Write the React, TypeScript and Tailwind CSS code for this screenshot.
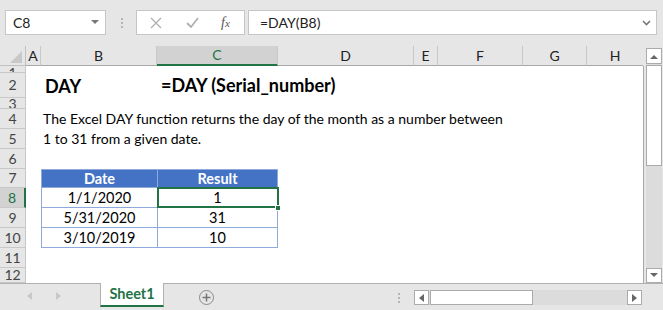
import React from "react";

const colWidths = [26, 15, 116, 121, 136, 24, 85, 64, 56];
const colNames = ["A", "B", "C", "D", "E", "F", "G", "H"];
const rowHeights = [7, 25, 11, 20, 20, 20, 19, 20, 20, 20, 20, 15];

const font = { fontFamily: "Lato, 'Open Sans', sans-serif" };

const RowLabel = ({ n, h }: { n: number; h: number }) => {
  const active = n === 8;
  let align = "items-center";
  if (n === 1) align = "items-start";
  if (n === 3) align = "items-end";
  return (
    <div
      className={`flex ${align} justify-center overflow-hidden border-b border-r border-[#c8c8c8] text-[14px] ${
        active
          ? "bg-[#d2d2d2] text-[#217346] border-r-2 border-r-[#217346]"
          : "bg-[#e6e6e6] text-[#444]"
      }`}
      style={{ height: h }}
    >
      <span className={n === 1 ? "-mt-[3px] leading-[20px]" : n === 3 ? "-mb-[6px] leading-[20px]" : "leading-[20px]"}>
        {n}
      </span>
    </div>
  );
};

export default function App() {
  const gridCols = colWidths.map((w) => `${w}px`).join(" ");
  const dates = ["1/1/2020", "5/31/2020", "3/10/2019"];
  const results = ["1", "31", "10"];
  return (
    <div
      className="flex h-[310px] w-[663px] flex-col overflow-hidden bg-[#e6e6e6] text-black"
      style={font}
    >
      {/* formula bar */}
      <div className="flex h-[46px] items-start pt-[10px]">
        <div className="ml-[5px] flex h-[25px] w-[101px] items-center justify-between border border-[#c6c6c6] bg-white pl-[7px] pr-[6px] text-[14px] text-[#222]">
          <span>C8</span>
          <svg width="8" height="5" viewBox="0 0 8 5">
            <path d="M0 0 L8 0 L4 4 Z" fill="#777" />
          </svg>
        </div>
        <div className="ml-[15px] flex h-[25px] flex-col items-center justify-center gap-[2px]">
          <div className="h-[2px] w-[2px] bg-[#b5b5b5]" />
          <div className="h-[2px] w-[2px] bg-[#b5b5b5]" />
          <div className="h-[2px] w-[2px] bg-[#b5b5b5]" />
        </div>
        <div className="ml-[13px] flex h-[25px] w-[109px] items-center border border-[#c6c6c6] bg-white">
          <svg className="ml-[13px]" width="12" height="12" viewBox="0 0 12 12">
            <path d="M1 1 L11 11 M11 1 L1 11" stroke="#b0b0b0" strokeWidth="1.3" />
          </svg>
          <svg className="ml-[24px]" width="13" height="11" viewBox="0 0 13 11">
            <path d="M1 6 L5 10 L12 1" stroke="#b0b0b0" strokeWidth="1.8" fill="none" />
          </svg>
          <span
            className="ml-[22px] text-[14px] italic text-[#555]"
            style={{ fontFamily: "'Liberation Serif', serif" }}
          >
            f<span className="text-[11px]">x</span>
          </span>
        </div>
        <div className="ml-[3px] flex h-[25px] w-[409px] items-center justify-between border border-[#c6c6c6] bg-white pl-[11px] pr-[5px] text-[14px] text-[#222]">
          <span>=DAY(B8)</span>
          <svg width="9" height="6" viewBox="0 0 9 6">
            <path d="M1 1 L4.5 4.5 L8 1" stroke="#777" strokeWidth="1.6" fill="none" />
          </svg>
        </div>
      </div>

      <div className="flex h-[237px]">
        {/* sheet */}
        <div className="w-[644px]">
          {/* column header */}
          <div className="grid h-[20px]" style={{ gridTemplateColumns: gridCols }}>
            <div className="relative border-b border-r border-[#c0c0c0] bg-[#e6e6e6]">
              <svg className="absolute bottom-[2px] right-[3px]" width="12" height="12" viewBox="0 0 12 12">
                <path d="M12 0 L12 12 L0 12 Z" fill="#c8c8c8" />
              </svg>
            </div>
            {colNames.map((c, i) => (
              <div
                key={c}
                className={`flex items-center justify-center text-[14px] leading-[18px] ${
                  i === colNames.length - 1 ? "" : "border-r border-[#c8c8c8]"
                } ${
                  c === "C"
                    ? "border-b-2 border-b-[#217346] bg-[#d2d2d2] text-[#217346]"
                    : "border-b border-b-[#a8a8a8] text-[#222]"
                }`}
              >
                {c}
              </div>
            ))}
          </div>

          {/* rows */}
          <div className="relative border-r border-[#a8a8a8]">
            {rowHeights.map((h, ri) => {
              const n = ri + 1;
              return (
                <div
                  key={n}
                  className="grid overflow-hidden"
                  style={{ gridTemplateColumns: gridCols, gridTemplateRows: `${h}px`, height: h }}
                >
                  <RowLabel n={n} h={h} />
                  <div className="bg-white" />
                  {n === 2 ? (
                    <>
                      <div className="flex items-center bg-white pl-[4px] text-[18px] font-bold leading-[22px]">DAY</div>
                      <div className="relative bg-white">
                        <span className="absolute left-[4px] top-[1px] whitespace-nowrap text-[18px] font-bold leading-[22px]">
                          =DAY (Serial_number)
                        </span>
                      </div>
                      <div className="col-span-5 bg-white" />
                    </>
                  ) : n === 4 || n === 5 ? (
                    <>
                      <div className="relative bg-white">
                        <span className="absolute left-[2px] top-[1px] whitespace-nowrap text-[14px] leading-[18px]">
                          {n === 4
                            ? "The Excel DAY function returns the day of the month as a number between"
                            : "1 to 31 from a given date."}
                        </span>
                      </div>
                      <div className="col-span-6 bg-white" />
                    </>
                  ) : n === 7 ? (
                    <>
                      <div className="flex items-center justify-center border-y border-l border-[#8eaadb] bg-[#4472c4] text-[14.5px] font-bold leading-[17px] text-white">
                        Date
                      </div>
                      <div className="flex items-center justify-center border border-[#8eaadb] bg-[#4472c4] text-[14.5px] font-bold leading-[17px] text-white">
                        Result
                      </div>
                      <div className="col-span-5 bg-white" />
                    </>
                  ) : n >= 8 && n <= 10 ? (
                    <>
                      <div className="flex items-center justify-center border-b border-l border-[#8eaadb] bg-white text-[14.5px] leading-[18px]">
                        {dates[n - 8]}
                      </div>
                      <div className="flex items-center justify-center border-b border-x border-[#8eaadb] bg-white text-[14.5px] leading-[18px]">
                        {results[n - 8]}
                      </div>
                      <div className="col-span-5 bg-white" />
                    </>
                  ) : (
                    <div className="col-span-7 bg-white" />
                  )}
                </div>
              );
            })}
            {/* selection on C8 */}
            <div className="pointer-events-none absolute left-[157px] top-[121px] h-[21px] w-[122px] border-2 border-[#217346]" />
            <div className="absolute left-[275px] top-[139px] h-[6px] w-[6px] border border-white bg-[#217346]" />
          </div>
        </div>

        {/* vertical scrollbar */}
        <div className="ml-[2px] flex w-[16px] flex-col pt-[2px]">
          <div className="flex h-[16px] items-center justify-center border border-[#ababab] bg-white">
            <svg width="8" height="5" viewBox="0 0 8 5">
              <path d="M0 5 L8 5 L4 1 Z" fill="#666" />
            </svg>
          </div>
          <div className="flex flex-1 flex-col bg-[#dcdcdc]">
            <div className="mt-[1px] h-[101px] border border-[#ababab] bg-white" />
          </div>
          <div className="flex h-[15px] items-center justify-center border border-[#ababab] bg-white">
            <svg width="8" height="5" viewBox="0 0 8 5">
              <path d="M0 0 L8 0 L4 4 Z" fill="#666" />
            </svg>
          </div>
        </div>
      </div>

      {/* sheet tabs */}
      <div className="flex h-[27px] items-start border-t border-[#b0b0b0]">
        <div className="flex h-[24px] w-[100px] items-center pl-[27px]">
          <svg width="5" height="8" viewBox="0 0 5 8">
            <path d="M5 0 L5 8 L0 4 Z" fill="#c8c8c8" />
          </svg>
          <svg className="ml-[24px]" width="5" height="8" viewBox="0 0 5 8">
            <path d="M0 0 L0 8 L5 4 Z" fill="#c8c8c8" />
          </svg>
        </div>
        <div className="-mt-[1px] flex h-[24px] w-[64px] items-center justify-center border-x border-[#b0b0b0] border-b-2 border-b-[#217346] bg-white text-[14.5px] font-bold text-[#217346]">
          Sheet1
        </div>
        <div className="ml-[35px] mt-[6px] flex h-[15px] w-[15px] items-center justify-center rounded-full border border-[#8a8a8a]">
          <svg width="9" height="9" viewBox="0 0 9 9">
            <path d="M4.5 0.5 V8.5 M0.5 4.5 H8.5" stroke="#777" strokeWidth="1.5" />
          </svg>
        </div>
        <div className="ml-[184px] mt-[9px] flex flex-col gap-[2px]">
          <div className="h-[2px] w-[2px] bg-[#b5b5b5]" />
          <div className="h-[2px] w-[2px] bg-[#b5b5b5]" />
          <div className="h-[2px] w-[2px] bg-[#b5b5b5]" />
        </div>
        <div className="ml-[14px] mt-[6px] flex h-[15px] w-[228px] bg-[#dcdcdc]">
          <div className="flex w-[15px] items-center justify-center border border-[#ababab] bg-white">
            <svg width="5" height="8" viewBox="0 0 5 8">
              <path d="M5 0 L5 8 L0 4 Z" fill="#666" />
            </svg>
          </div>
          <div className="ml-[1px] w-[103px] border border-[#ababab] bg-white" />
          <div className="flex-1" />
          <div className="flex w-[15px] items-center justify-center border border-[#ababab] bg-white">
            <svg width="5" height="8" viewBox="0 0 5 8">
              <path d="M0 0 L0 8 L5 4 Z" fill="#666" />
            </svg>
          </div>
        </div>
      </div>
    </div>
  );
}
